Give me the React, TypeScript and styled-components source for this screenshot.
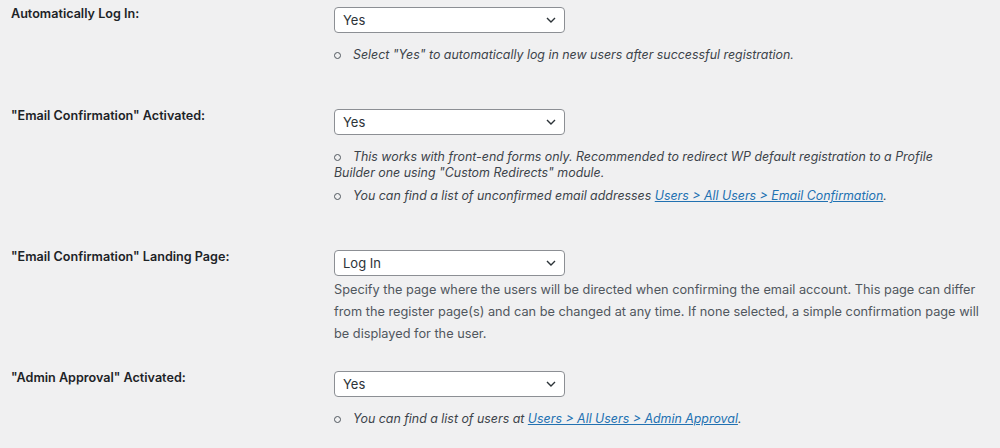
import React from "react";
import styled, { createGlobalStyle } from "styled-components";

const Global = createGlobalStyle`
  html, body { margin: 0; padding: 0; background: #f0f0f1; }
  body { font-family: Inter, Roboto, "Noto Sans", Arial, sans-serif; color: #3c434a; }
  * { box-sizing: border-box; }
`;

const Page = styled.div`
  width: 1000px;
  min-height: 448px;
  background: #f0f0f1;
`;

const Row = styled.div`
  display: flex;
  align-items: flex-start;
  padding-top: 5px;
`;

const Label = styled.div`
  width: 334px;
  flex: none;
  padding: 1px 0 0 11px;
  font-size: 12.6px;
  line-height: 16px;
  font-weight: 600;
  color: #1d2327;
`;

const Field = styled.div`
  flex: 1;
  padding-top: 2px;
  padding-right: 4px;
`;

const SelectBox = styled.div`
  position: relative;
  width: 231px;
  height: 26px;
  background: #fff;
  border: 1px solid #8c8f94;
  border-radius: 4px;
  display: flex;
  align-items: center;
  padding-left: 8px;
  font-size: 13px;
  color: #2c3338;
`;

const Chevron = styled.svg`
  position: absolute;
  right: 8px;
  top: 50%;
  margin-top: -3px;
`;

const List = styled.ul<{ $after: number }>`
  list-style: none;
  margin: 14px 0 ${(p) => p.$after}px;
  padding: 0;
`;

const Item = styled.li`
  font-style: italic;
  font-size: 12.4px;
  line-height: 16px;
  color: #3c434a;
  & + & { margin-top: 7px; }
  &::before {
    content: "";
    display: inline-block;
    width: 5px;
    height: 5px;
    border: 1px solid #50575e;
    border-radius: 50%;
    margin: 0 12px 1px 0;
    vertical-align: middle;
  }
`;

const Link = styled.a`
  color: #2271b1;
  text-decoration: underline;
`;

const Description = styled.p`
  margin: 3px 0 19px;
  font-size: 12.75px;
  line-height: 22px;
  color: #50575e;
`;

function Select({ value }: { value: string }) {
  return (
    <SelectBox>
      {value}
      <Chevron width="10" height="6" viewBox="0 0 10 6">
        <polyline points="1,1 5,5 9,1" fill="none" stroke="#2c3338" strokeWidth="1.4" />
      </Chevron>
    </SelectBox>
  );
}

export default function App() {
  return (
    <Page>
      <Global />
      <Row>
        <Label>Automatically Log In:</Label>
        <Field>
          <Select value="Yes" />
          <List $after={39}>
            <Item>Select "Yes" to automatically log in new users after successful registration.</Item>
          </List>
        </Field>
      </Row>
      <Row>
        <Label>"Email Confirmation" Activated:</Label>
        <Field>
          <Select value="Yes" />
          <List $after={39}>
            <Item>
              This works with front-end forms only. Recommended to redirect WP default registration to a Profile
              <br />
              Builder one using "Custom Redirects" module.
            </Item>
            <Item>
              You can find a list of unconfirmed email addresses <Link href="#">Users &gt; All Users &gt; Email Confirmation</Link>.
            </Item>
          </List>
        </Field>
      </Row>
      <Row>
        <Label>"Email Confirmation" Landing Page:</Label>
        <Field>
          <Select value="Log In" />
          <Description>
            Specify the page where the users will be directed when confirming the email account. This page can differ
            <br />
            from the register page(s) and can be changed at any time. If none selected, a simple confirmation page will
            <br />
            be displayed for the user.
          </Description>
        </Field>
      </Row>
      <Row>
        <Label>"Admin Approval" Activated:</Label>
        <Field>
          <Select value="Yes" />
          <List $after={20}>
            <Item>
              You can find a list of users at <Link href="#">Users &gt; All Users &gt; Admin Approval</Link>.
            </Item>
          </List>
        </Field>
      </Row>
    </Page>
  );
}
